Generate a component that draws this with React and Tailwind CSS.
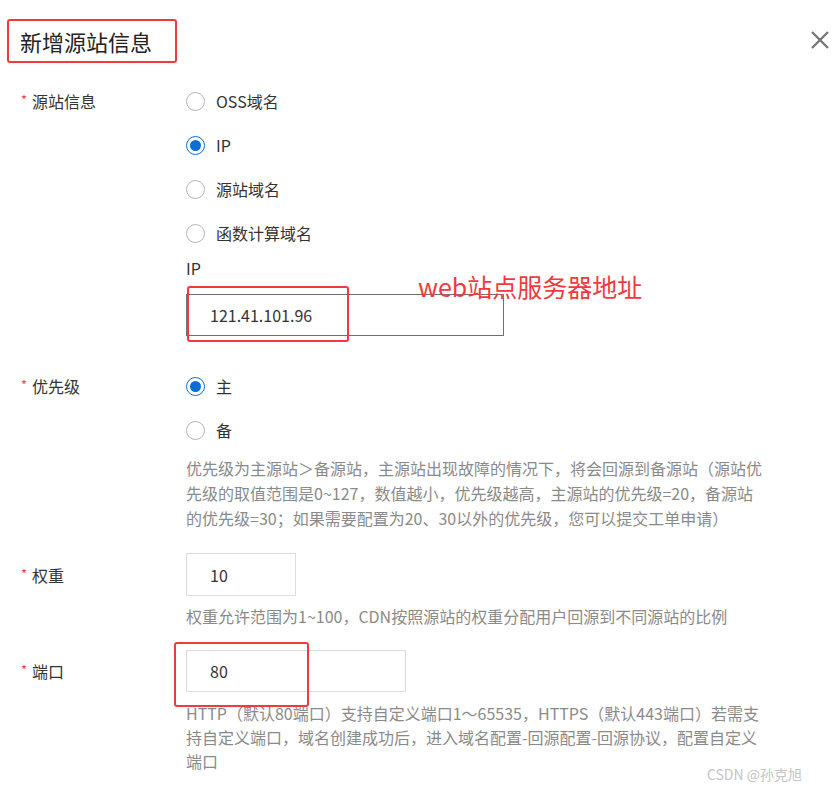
import React from 'react';

const FONT = { fontFamily: '"Noto Sans CJK SC", "Noto Sans", sans-serif' };

const Radio = ({ checked, label }) => (
  <div className="flex h-[44px] items-center">
    <span
      className={`flex h-[19px] w-[19px] items-center justify-center rounded-full border bg-white ${
        checked ? 'border-[#0a6fd4]' : 'border-[#b5b5b5]'
      }`}
    >
      {checked && <span className="h-[11px] w-[11px] rounded-full bg-[#0a6fd4]" />}
    </span>
    <span className="ml-[11px] text-[16px] text-[#333]">{label}</span>
  </div>
);

const Label = ({ children }) => (
  <div className="flex h-[44px] w-[165px] shrink-0 items-center text-[16px] text-[#333]">
    <span className="mr-[5px] mt-[-2px] text-[13px] text-[#e5483f]">*</span>
    {children}
  </div>
);

const Help = ({ lines, leading = 'leading-[25px]' }) => (
  <div className={`text-[16px] text-[#8a8a8a] ${leading}`}>
    {lines.map((l) => (
      <div key={l} className="whitespace-nowrap">{l}</div>
    ))}
  </div>
);

export default function App() {
  return (
    <div style={FONT} className="relative h-[793px] w-[832px] overflow-hidden bg-white pl-[21px]">
      {/* header */}
      <div className="flex items-start justify-between pt-[19px] pr-[2px]">
        <div className="ml-[-14px] flex h-[44px] w-[170px] items-center rounded-[3px] border-2 border-[#f2393c] pl-[11px] text-[22px] text-[#222]">
          新增源站信息
        </div>
        <button className="mt-[11px] text-[#777]">
          <svg width="20" height="20" viewBox="0 0 20 20" fill="none" stroke="currentColor" strokeWidth="2.4">
            <path d="M2 2l16 16M18 2L2 18" />
          </svg>
        </button>
      </div>

      {/* 源站信息 */}
      <div className="mt-[16px] flex">
        <Label>源站信息</Label>
        <div>
          <Radio label="OSS域名" />
          <Radio checked label="IP" />
          <Radio label="源站域名" />
          <Radio label="函数计算域名" />
          <div className="mt-[1px] text-[16px] leading-[24px] text-[#333]">IP</div>
          <div className="relative mt-[14px] w-[318px]">
            <div className="flex h-[42px] items-center border border-[#707070] pl-[23px] text-[16px] text-[#333]">
              121.41.101.96
            </div>
            <div className="absolute left-[1px] top-[-8px] h-[56px] w-[162px] rounded-[3px] border-2 border-[#f2393c]" />
            <div className="absolute left-[232px] top-[-26px] whitespace-nowrap text-[25px] text-[#f2393c]">
              web站点服务器地址
            </div>
          </div>
        </div>
      </div>

      {/* 优先级 */}
      <div className="mt-[28px] flex">
        <Label>优先级</Label>
        <div>
          <Radio checked label="主" />
          <Radio label="备" />
          <div className="mt-[4px]">
            <Help
              lines={[
                '优先级为主源站＞备源站，主源站出现故障的情况下，将会回源到备源站（源站优',
                '先级的取值范围是0~127，数值越小，优先级越高，主源站的优先级=20，备源站',
                '的优先级=30；如果需要配置为20、30以外的优先级，您可以提交工单申请）',
              ]}
            />
          </div>
        </div>
      </div>

      {/* 权重 */}
      <div className="mt-[22px] flex">
        <div className="flex h-[43px] items-center">
          <Label>权重</Label>
        </div>
        <div>
          <div className="flex h-[43px] w-[110px] items-center border border-[#dcdcdc] pl-[23px] text-[16px] text-[#333]">
            10
          </div>
          <div className="mt-[8px]">
            <Help leading="leading-[24px]" lines={['权重允许范围为1~100，CDN按照源站的权重分配用户回源到不同源站的比例']} />
          </div>
        </div>
      </div>

      {/* 端口 */}
      <div className="mt-[22px] flex">
        <div className="flex h-[42px] items-center">
          <Label>端口</Label>
        </div>
        <div>
          <div className="relative w-[220px]">
            <div className="flex h-[42px] items-center border border-[#dcdcdc] pl-[23px] text-[16px] text-[#333]">
              80
            </div>
            <div className="absolute left-[-12px] top-[-8px] h-[65px] w-[135px] rounded-[3px] border-2 border-[#f2393c]" />
          </div>
          <div className="mt-[9px]">
            <Help
              leading="leading-[24px]"
              lines={[
                'HTTP（默认80端口）支持自定义端口1～65535，HTTPS（默认443端口）若需支',
                '持自定义端口，域名创建成功后，进入域名配置-回源配置-回源协议，配置自定义',
                '端口',
              ]}
            />
          </div>
        </div>
      </div>

      <div className="absolute bottom-[8px] right-[30px] text-[14px] text-[#c4c4c4]">CSDN @孙克旭</div>
    </div>
  );
}
